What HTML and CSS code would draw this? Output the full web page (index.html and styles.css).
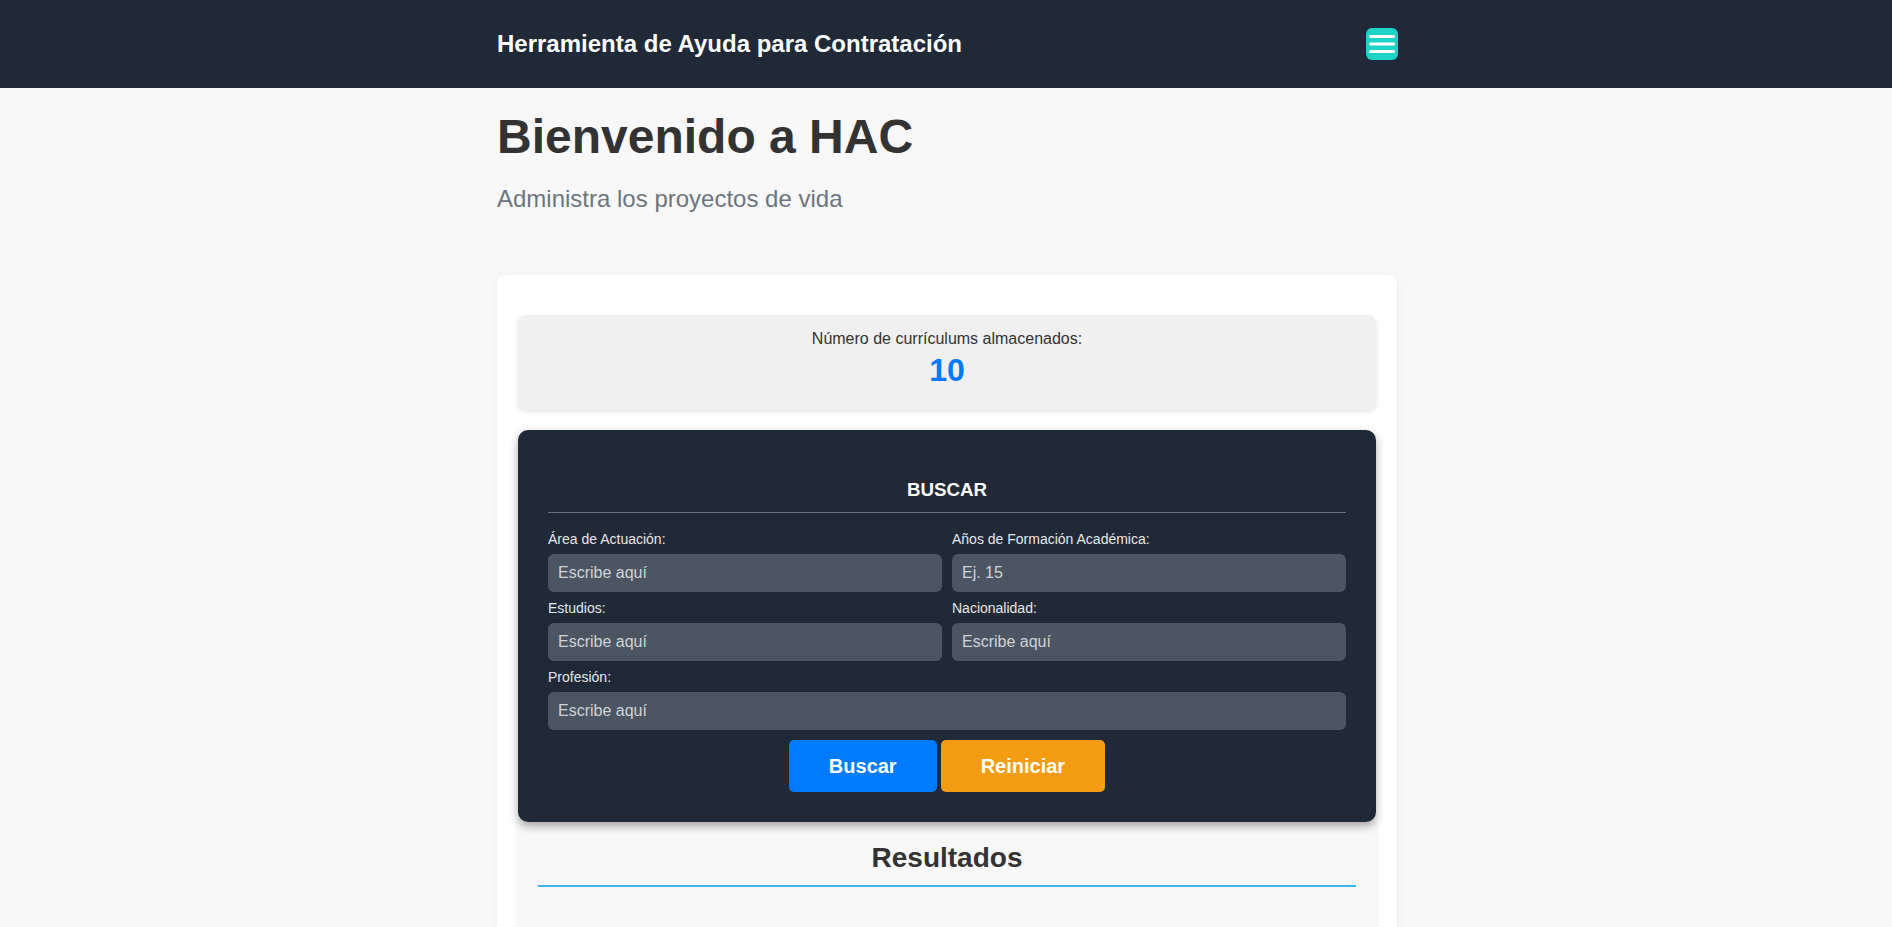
FILE: index.html
```html
<!DOCTYPE html>
<html lang="es">
<head>
<meta charset="utf-8">
<title>HAC</title>
<link rel="stylesheet" href="styles.css">
</head>
<body>
<header class="topbar">
  <div class="topbar-inner">
    <div class="brand">Herramienta de Ayuda para Contratación</div>
    <button class="menu-btn" aria-label="Menú">
      <svg width="32" height="32" viewBox="0 0 32 32">
        <path d="M4.5 8.5H27.5M4.5 16H27.5M4.5 23.5H27.5" stroke="#ffffff" stroke-width="3" stroke-linecap="round" fill="none"/>
      </svg>
    </button>
  </div>
</header>

<div class="page-wrap">
<main class="page">
  <h1 class="title">Bienvenido a HAC</h1>
  <p class="subtitle">Administra los proyectos de vida</p>

  <section class="card">
    <div class="stat">
      <div class="stat-label">Número de currículums almacenados:</div>
      <div class="stat-value">10</div>
    </div>

    <form class="search">
      <h3 class="search-title">BUSCAR</h3>
      <div class="fields">
        <div class="field">
          <label class="field-label">Área de Actuación:</label>
          <input class="field-input" type="text" placeholder="Escribe aquí">
        </div>
        <div class="field">
          <label class="field-label">Años de Formación Académica:</label>
          <input class="field-input" type="text" placeholder="Ej. 15">
        </div>
        <div class="field">
          <label class="field-label">Estudios:</label>
          <input class="field-input" type="text" placeholder="Escribe aquí">
        </div>
        <div class="field">
          <label class="field-label">Nacionalidad:</label>
          <input class="field-input" type="text" placeholder="Escribe aquí">
        </div>
        <div class="field field-wide">
          <label class="field-label">Profesión:</label>
          <input class="field-input" type="text" placeholder="Escribe aquí">
        </div>
      </div>
      <div class="actions">
        <button type="button" class="btn btn-blue">Buscar</button>
        <button type="button" class="btn btn-orange">Reiniciar</button>
      </div>
    </form>

    <section class="results">
      <h2 class="results-title">Resultados</h2>
    </section>
  </section>
</main>
</div>
</body>
</html>
```

FILE: styles.css
```css
* { box-sizing: border-box; }

html, body {
  margin: 0;
  padding: 0;
}

body {
  background: #f8f8f8;
  font-family: "Liberation Sans", Arial, sans-serif;
  color: #333333;
  overflow: hidden;
}

.topbar {
  background: #1f2937;
  height: 88px;
  padding-left: 2px;
}

.topbar-inner {
  width: 900px;
  margin: 0 auto;
  height: 100%;
  display: flex;
  align-items: center;
  justify-content: space-between;
}

.brand {
  color: #ffffff;
  font-size: 24px;
  font-weight: bold;
}

.menu-btn {
  width: 32px;
  height: 32px;
  padding: 0;
  border: none;
  border-radius: 6px;
  background: #1dd3c5;
  display: flex;
  align-items: center;
  justify-content: center;
  margin-right: -1px;
}

.menu-btn svg { display: block; }

.page-wrap {
  padding-left: 2px;
}

.page {
  width: 900px;
  margin: 0 auto;
}

.title {
  margin: 21px 0 0;
  font-size: 48px;
  font-weight: bold;
  color: #333333;
}

.subtitle {
  margin: 21px 0 0;
  font-size: 24px;
  color: #6c757d;
}

.card {
  margin-top: 62px;
  background: #ffffff;
  border-radius: 8px;
  box-shadow: 0 2px 10px rgba(0, 0, 0, 0.05);
  padding: 40px 21px 0 21px;
}

.stat {
  background: #f0f0f0;
  border-radius: 8px;
  box-shadow: 0 2px 5px rgba(0, 0, 0, 0.1);
  padding: 15px 15px 21px;
  text-align: center;
  height: 95px;
}

.stat-label {
  font-size: 16px;
  color: #333333;
}

.stat-value {
  margin-top: 4px;
  font-size: 32px;
  font-weight: bold;
  color: #007bff;
}

.search {
  position: relative;
  z-index: 1;
  margin-top: 20px;
  background: #1f2937;
  border-radius: 10px;
  padding: 30px 30px 30px;
  box-shadow: 0 4px 10px rgba(0, 0, 0, 0.35);
}

.search-title {
  margin: 18.72px 0;
  padding-bottom: 11px;
  border-bottom: 1px solid #6b7280;
  text-align: center;
  color: #ffffff;
  font-size: 18.72px;
  font-weight: bold;
}

.fields {
  display: grid;
  grid-template-columns: 1fr 1fr;
  column-gap: 10px;
  row-gap: 8px;
}

.field-wide { grid-column: 1 / 3; }

.field-label {
  display: block;
  font-size: 14px;
  line-height: 16px;
  color: #e5e7eb;
  margin-bottom: 7px;
}

.field-input {
  display: block;
  width: 100%;
  height: 38px;
  border: none;
  border-radius: 6px;
  background: #4b5563;
  color: #ffffff;
  padding: 0 10px;
  font-family: "Liberation Sans", Arial, sans-serif;
  font-size: 16px;
  outline: none;
}

.field-input::placeholder { color: #cfd3d8; }

.actions {
  margin-top: 10px;
  display: flex;
  justify-content: center;
  gap: 4px;
}

.btn {
  border: none;
  border-radius: 5px;
  color: #ffffff;
  font-family: "Liberation Sans", Arial, sans-serif;
  font-size: 20px;
  font-weight: bold;
  line-height: 22px;
  padding: 15px 40px;
}

.btn-blue { background: #007bff; }
.btn-orange { background: #f39c12; }

.results {
  background: #f8f8f8;
  box-shadow: 0 0 5px rgba(0, 0, 0, 0.08);
  padding: 20px 20px;
  min-height: 260px;
}

.results-title {
  margin: 0;
  padding-bottom: 11px;
  border-bottom: 2px solid #3db5e6;
  text-align: center;
  font-size: 28px;
  font-weight: bold;
  color: #333333;
}
```
